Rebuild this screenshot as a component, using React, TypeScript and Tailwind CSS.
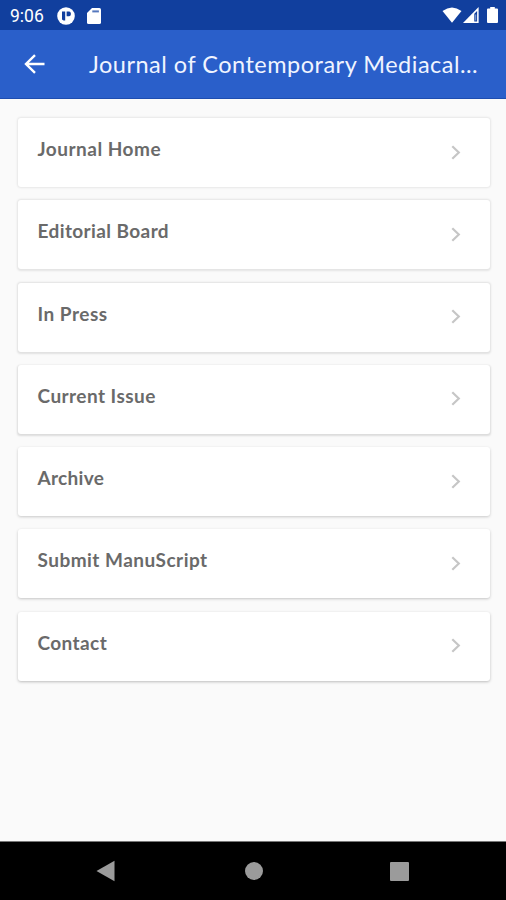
const menuItems = [
  { label: "Journal Home", tracking: "tracking-[0.5px]", shadow: "shadow-[0_0_2px_1px_rgba(0,0,0,0.08)]" },
  { label: "Editorial Board", tracking: "tracking-[0.4px]", shadow: "shadow-[0_0.5px_2px_1px_rgba(0,0,0,0.09)]" },
  { label: "In Press", tracking: "tracking-[0.5px]", shadow: "shadow-[0_0.5px_2px_1px_rgba(0,0,0,0.10)]" },
  { label: "Current Issue", tracking: "tracking-[0.45px]", shadow: "shadow-[0_1px_2px_0.5px_rgba(0,0,0,0.12)]" },
  { label: "Archive", tracking: "tracking-[0.3px]", shadow: "shadow-[0_1px_3px_0px_rgba(0,0,0,0.20)]" },
  { label: "Submit ManuScript", tracking: "tracking-[0.47px]", shadow: "shadow-[0_1px_3px_0px_rgba(0,0,0,0.22)]" },
  { label: "Contact", tracking: "tracking-[0.4px]", shadow: "shadow-[0_1px_3px_0px_rgba(0,0,0,0.25)]" },
];

function StatusBar() {
  return (
    <div className="flex h-[30px] items-center bg-[#113f9e] pl-[10px] pr-[8px] text-white">
      <span className="w-[47px] pt-[2px] font-[Roboto] text-[17.5px] leading-[30px]">9:06</span>
      <svg className="mt-[1px] h-[18px] w-[18px]" viewBox="0 0 18 18">
        <circle cx="9" cy="9" r="8.8" fill="#fff" />
        <path d="M5 4.500h3.200v9H6.500L5 12.500z" fill="#113f9e" />
        <path d="M9.600 4.500h2.500q1.700 0 1.700 1.700v1.300q0 1.700-1.700 1.700H9.600z" fill="#113f9e" />
      </svg>
      <svg className="ml-[12px] mt-[1px] h-[16px] w-[14px]" viewBox="0 0 14 16">
        <path d="M5 0h7.4Q14 0 14 1.6v12.8q0 1.6-1.6 1.6H1.6Q0 16 0 14.4V5z" fill="#fff" />
        <path d="M5.300 2.400h6.600v2H5.300z" fill="#5577bd" />
      </svg>
      <div className="ml-auto flex items-center">
        <svg className="h-[16px] w-[20px]" viewBox="0 0 20 16">
          <path d="M0.5 4Q10-3.2 19.5 4L10 15.8z" fill="#fff" />
        </svg>
        <svg className="ml-[1px] h-[16px] w-[16px]" viewBox="0 0 16 16">
          <path d="M15.6 0v16H0z" fill="#fff" />
          <path d="M14.100 4v10.500h-2.800V6.800z" fill="#113f9e" />
          <path d="M12.200 7.500h1v6h-1z" fill="#8fa8d8" />
        </svg>
        <svg className="ml-[8px] h-[16px] w-[11px]" viewBox="0 0 11 16">
          <path d="M3.2 0h4.6v1.6H10q1 0 1 1V15q0 1-1 1H1q-1 0-1-1V2.600q0-1 1-1h2.200z" fill="#fff" />
        </svg>
      </div>
    </div>
  );
}

function AppBar() {
  return (
    <header className="flex h-[69px] items-center border-b border-[#1d4db0] bg-[#2a5fca] pl-[24px] text-white">
      <button type="button" aria-label="Back" className="w-[65px]">
        <svg className="h-[20px] w-[21px]" viewBox="0 0 21 20" fill="none" stroke="#fff" strokeWidth="2.4">
          <path d="M20.500 10H2.300M11 1.200L2 10l9 8.800" />
        </svg>
      </button>
      <h1 className="whitespace-nowrap text-[23.5px] leading-[30px] tracking-[0.5px] text-[#f0f4ff]">
        Journal of Contemporary Mediacal...
      </h1>
    </header>
  );
}

function NavigationBar() {
  return (
    <nav className="flex h-[59px] items-center border-t border-[#777777] bg-black">
      <svg className="ml-[96px] h-[22px] w-[19px]" viewBox="0 0 19 22">
        <path d="M0.500 11L18.500 0.700v20.600z" fill="#9b9b9b" />
      </svg>
      <div className="ml-[129.5px] h-[18px] w-[18px] rounded-full bg-[#9b9b9b]" />
      <div className="ml-[127px] h-[19px] w-[19px] rounded-[1px] bg-[#9b9b9b]" />
    </nav>
  );
}

export default function App() {
  return (
    <div className="flex h-[900px] w-[506px] flex-col overflow-hidden bg-[#fafafa] font-[Lato,sans-serif]">
      <StatusBar />
      <AppBar />
      <main className="flex flex-1 flex-col gap-[13.3px] pl-[18px] pr-[16.5px] pt-[19px]">
        {menuItems.map((item) => (
          <a
            key={item.label}
            href="#"
            className={`flex h-[69px] shrink-0 justify-between rounded-[3px] bg-white pl-[19.5px] pr-[29px] ${item.shadow}`}
          >
            <span className={`pt-[19px] text-[19px] font-bold leading-[24px] text-[#6a6a6a] ${item.tracking}`}>
              {item.label}
            </span>
            <svg className="mt-[26.5px] h-[15px] w-[10px]" viewBox="0 0 10 15" fill="none" stroke="#c6c6c6" strokeWidth="2.2">
              <path d="M1.300 1.200L7.800 7.500l-6.500 6.300" />
            </svg>
          </a>
        ))}
      </main>
      <NavigationBar />
    </div>
  );
}
